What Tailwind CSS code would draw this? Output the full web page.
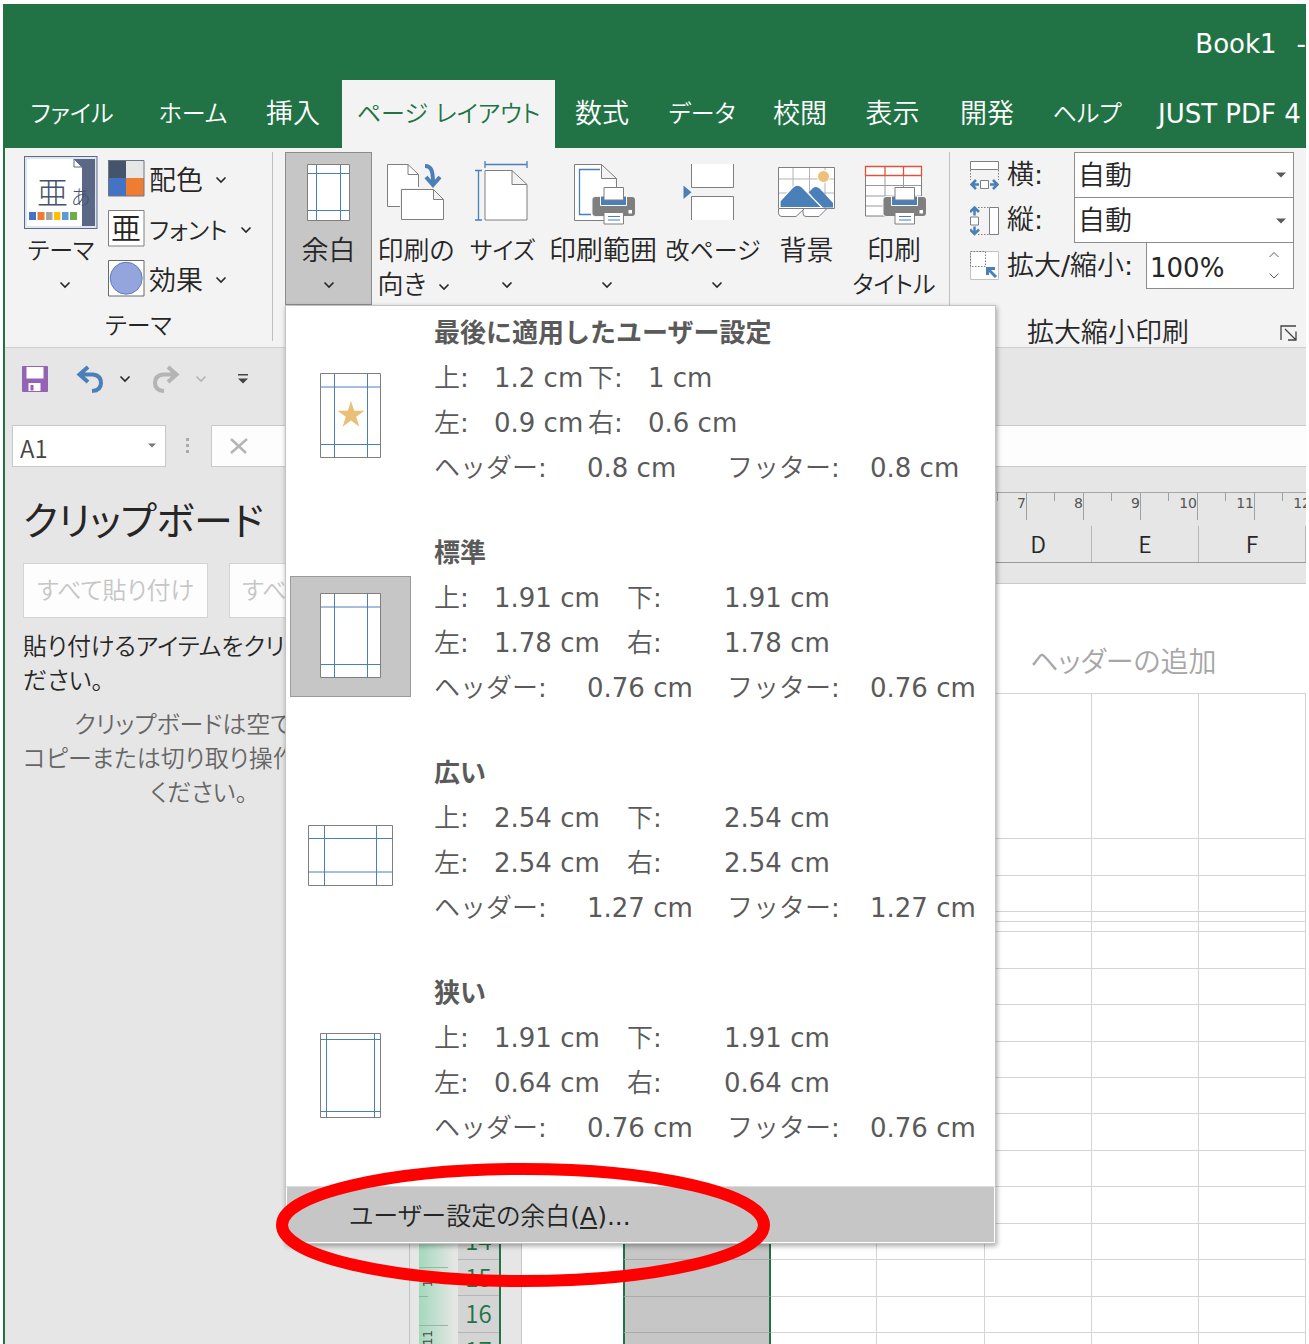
<!DOCTYPE html>
<html lang="ja">
<head>
<meta charset="utf-8">
<title>Book1</title>
<meta name="viewport" content="width=device-width, initial-scale=1">
<script src="https://cdn.jsdelivr.net/npm/@tailwindcss/browser@4"></script>
</head>
<body class="bg-white">
<svg class="hidden" aria-hidden="true">
  <symbol id="chev" viewBox="0 0 12 8"><path d="M1.5 1.5 6 6l4.500-4.500" fill="none" stroke="currentColor" stroke-width="1.600"/></symbol>
  <symbol id="tri" viewBox="0 0 10 6"><path d="M0 .5h10L5 5.500z" fill="currentColor"/></symbol>
  <symbol id="printer" viewBox="0 0 64 64">
    <rect x="18.500" y="34" width="45" height="21" rx="4" fill="#f3f3f3"/>
    <rect x="19.500" y="35" width="42.500" height="19" rx="3" fill="#7f7f7f"/>
    <path d="M27.500 34h26v9.500h-26z" fill="#4a7fb8" stroke="#fff"/>
    <path d="M31 25.500h19.500V38H31zM31 50.500h19.500V62H31z" fill="#fff" stroke="#7f7f7f"/>
    <path d="M35 54.500h12M35 58h12" stroke="#4a7fb8" stroke-width="1.200"/>
    <rect x="55.500" y="48" width="3.500" height="3.500" fill="#fff"/>
  </symbol>
</svg>

<div class="flex h-screen flex-col overflow-hidden px-[3px] pt-1 font-['DejaVu_Sans','Noto_Sans_CJK_JP',sans-serif] text-[26px] font-[350] text-[#262626]">
<div class="flex min-h-0 flex-1 flex-col border-l-2 border-[#217346] bg-[#e6e6e6]">

  <header class="shrink-0 overflow-hidden bg-[#217346] text-white">
    <div class="flex h-[76px] items-center justify-end gap-5 pt-1 font-normal"><span>Book1</span><span>-</span></div>
    <nav class="flex h-[68px] text-[27px] whitespace-nowrap [font-feature-settings:'palt']">
      <button class="w-[134px] shrink-0 text-2xl">ファイル</button>
      <button class="w-[108px] shrink-0 text-2xl">ホーム</button>
      <button class="w-[92px] shrink-0">挿入</button>
      <button class="ml-[3px] w-[213px] shrink-0 bg-[#f3f3f3] text-2xl text-[#217346]">ページ レイアウト</button>
      <button class="w-[94px] shrink-0">数式</button>
      <button class="w-[106px] shrink-0 text-2xl">データ</button>
      <button class="w-[90px] shrink-0">校閲</button>
      <button class="w-[95px] shrink-0">表示</button>
      <button class="w-[94px] shrink-0">開発</button>
      <button class="w-[106px] shrink-0 text-2xl">ヘルプ</button>
      <button class="shrink-0 pl-[18px] text-[26px] font-normal">JUST PDF 4</button>
    </nav>
  </header>

  <section class="flex h-[200px] shrink-0 border-b border-[#cfcfcf] bg-[#f3f3f3] pt-1 text-[27px] whitespace-nowrap [font-feature-settings:'palt']">
    <div class="mb-[6px] flex w-[268px] shrink-0 flex-col border-r border-[#c0c0c0]">
      <div class="flex h-[153px] pl-[18px]">
        <button class="flex w-[76px] flex-col items-center pt-1">
          <svg class="h-[74px] w-[74px]" viewBox="0 0 74 74">
            <rect x=".5" y=".5" width="72.500" height="72" fill="#dfe6ee" stroke="#5b6b8c"/>
            <rect x="3" y="3" width="68" height="67" fill="#5a6886"/>
            <path d="M3 3h47l8 8v59H3z" fill="#fff"/><path d="M50 3v8h8z" fill="#fff" stroke="#5a6886"/>
            <text x="13" y="48" font-size="31" font-weight="300" fill="#44546a">亜</text>
            <text x="47" y="49" font-size="20" font-weight="300" fill="#44546a">あ</text>
            <path d="M5 56h7v8H5z" fill="#4472c4"/><path d="M13.500 56h7v8h-7z" fill="#ed7d31"/><path d="M22 56h6.500v8H22z" fill="#a5a5a5"/><path d="M30 56h6.500v8H30z" fill="#ffc000"/><path d="M38 56h6.500v8H38z" fill="#5b9bd5"/><path d="M46 56h7v8h-7z" fill="#70ad47"/>
          </svg>
          <span class="mt-1 text-2xl leading-[34px]">テーマ</span>
          <svg class="mt-[13px] ml-2 h-2 w-3"><use href="#chev"/></svg>
        </button>
        <div class="flex flex-col pt-px pl-[9px]">
          <button class="flex h-[50px] items-center gap-1">
            <svg class="h-[37px] w-[37px]" viewBox="0 0 37 37"><path fill="#44546a" d="M0 0h18v18H0z"/><path fill="#e7e6e6" d="M18 0h18v18H18z"/><path fill="#4472c4" d="M0 18h18v18H0z"/><path fill="#ed7d31" d="M18 18h18v18H18z"/><path d="M.5.5h35.500V36H.5z" fill="none" stroke="#6f7680"/></svg>
            <span class="pt-[6px]">配色</span><svg class="mt-1 ml-2 h-2 w-3"><use href="#chev"/></svg>
          </button>
          <button class="flex h-[50px] items-center gap-1">
            <svg class="h-[37px] w-[37px]" viewBox="0 0 37 37"><path d="M.5.5h35.500V36H.5z" fill="#fff" stroke="#7f7f7f"/><text x="3" y="29" font-size="30" font-weight="350" fill="#262626">亜</text></svg>
            <span class="pt-[6px] text-2xl">フォント</span><svg class="mt-1 ml-2 h-2 w-3"><use href="#chev"/></svg>
          </button>
          <button class="flex h-[50px] items-center gap-1">
            <svg class="h-[37px] w-[37px]" viewBox="0 0 37 37"><path d="M.5.5h35.500V36H.5z" fill="#fff" stroke="#6b6b6b"/><circle cx="18.200" cy="18.200" r="16" fill="#93a5dc" stroke="#5c7fc0"/></svg>
            <span class="pt-[6px]">効果</span><svg class="mt-1 ml-2 h-2 w-3"><use href="#chev"/></svg>
          </button>
        </div>
      </div>
      <div class="pt-[5px] text-center text-2xl leading-9">テーマ</div>
    </div>

    <div class="ml-3 flex h-[153px] w-[665px] shrink-0 border-r border-[#c0c0c0] leading-[34px]">
      <div class="relative">
        <button class="flex h-[153px] w-[87px] flex-col items-center border border-[#8c8c8c] bg-[#c6c6c6] pt-[9px]" aria-expanded="true">
          <svg class="h-16 w-[45px]" viewBox="0 0 45 64" fill="none"><path d="M1.500 2.500h42v56h-42z" fill="#fff" stroke="#7f7f7f"/><path d="M10.500 3v55M34.500 3v55M2 11.500h41M2 48.500h41" stroke="#4a7fb8"/></svg>
          <span class="mt-2">余白</span>
          <svg class="mt-[13px] h-2 w-3"><use href="#chev"/></svg>
        </button>

        <div class="absolute top-full left-0 z-10 w-[711px] border border-[#c3c3c3] bg-white text-[26px] text-[#5a5a5a] shadow-[1px_2px_5px_rgba(0,0,0,0.35)] [font-feature-settings:normal]">
          <div id="presets"></div>
          <div class="relative border-t border-[#dcdcdc] pr-px pb-px pl-px">
            <button class="flex h-[55px] w-full items-center bg-[#c6c6c6] pt-1 pl-[62px] text-[25px] text-[#262626] [font-feature-settings:'palt']"><span>ユーザー設定の余白<span class="font-normal">(<u>A</u>)...</span></span></button>
            <svg class="absolute -top-6 -left-[10px] h-[124px] w-[494px]" viewBox="0 0 494 124" fill="none"><ellipse cx="247" cy="62" rx="241" ry="56" stroke="#f00" stroke-width="12"/></svg>
          </div>
        </div>
      </div>

      <button class="flex w-[88px] flex-col items-center pt-[10px]">
        <svg class="h-16 w-[60px] shrink-0" viewBox="0 0 60 64" fill="none" stroke="#7f7f7f"><path d="M14 44.500H1.500v-42H22l10.500 10V26H14z" fill="#fff" stroke="none"/><path d="M14 44.500H1.500v-42H22l10.500 10V25M22 2.500v10h10.500"/><path d="M15.500 27.500h32l10 10v20h-42zM47.500 27.500v10h10" fill="#fff"/><path d="M39 4c6 0 8 4 8 17M40 15l7 8 7-8" stroke="#4a7fb8" stroke-width="4"/></svg>
        <span class="mt-2 block text-left text-[26px] leading-[34px]">印刷の<br>向き<svg class="ml-3 inline h-2 w-3"><use href="#chev"/></svg></span>
      </button>
      <button class="flex w-[85px] flex-col items-center pt-[10px]">
        <svg class="mr-1 h-16 w-[54px] shrink-0 overflow-visible" viewBox="0 0 54 64" fill="none"><path d="M11 8.500h27l15 14V58H11zM38 8.500v14h15" fill="#fff" stroke="#7f7f7f"/><path d="M11 2.500h42M11-1v7M53-1v7M4.500 8.500V58M1 8.500h7M1 58h7" stroke="#4a7fb8" stroke-width="1.300"/></svg>
        <span class="mt-2 text-2xl leading-[34px]">サイズ</span><svg class="mt-[13px] ml-2 h-2 w-3"><use href="#chev"/></svg>
      </button>
      <button class="flex w-[116px] flex-col items-center pt-[10px]">
        <svg class="ml-1 h-16 w-16 shrink-0" viewBox="0 0 64 64" fill="none"><path d="M1.500 2.500h27l15 14v42h-42zM28.500 2.500v14h15" fill="#fff" stroke="#7f7f7f"/><path d="M27 7.500H6.500v45H18" stroke="#4a7fb8" stroke-width="1.300"/><use href="#printer" width="64" height="64"/></svg>
        <span class="mt-2">印刷範囲</span><svg class="mt-[13px] ml-2 h-2 w-3"><use href="#chev"/></svg>
      </button>
      <button class="flex w-[104px] flex-col items-center pt-[10px]">
        <svg class="mr-2 h-16 w-[54px] shrink-0" viewBox="0 0 54 64" fill="#fff"><path d="M9.500 2v23.500h42V2M9.500 58V34.500h42V58" stroke="#7f7f7f"/><path d="M1.500 23.500v13.500l8-6.700z" fill="#4a7fb8"/></svg>
        <span class="mt-2 text-2xl leading-[34px]">改ページ</span><svg class="mt-[13px] ml-2 h-2 w-3"><use href="#chev"/></svg>
      </button>
      <button class="flex w-[83px] flex-col items-center pt-[10px]">
        <svg class="h-16 w-[60px] shrink-0" viewBox="0 0 60 64" fill="none"><path d="M1.500 47v4q0 3.500 3.500 3.500h14l8.500-8M26 48v3q0 3.500 3 3.500h13l8-8" fill="#fff" stroke="#7f7f7f"/><path d="M1.500 5.500h56v41h-56z" fill="#fff" stroke="#7f7f7f"/><path d="M16 6v40M32.500 6v40M48 6v40M2 17h55M2 31h55" stroke="#b5b5b5"/><circle cx="46.500" cy="14.500" r="6.500" fill="#fff"/><circle cx="46.500" cy="14.500" r="5.500" fill="#eec17a"/><path d="m32 30 4-4q3.500-2.500 7 1l13 14v4.500H42z" fill="#4a7fb8"/><path d="M3 45.500V39l13-14q4.500-4 9 0l20 20.500z" fill="#4a7fb8" stroke="#fff" stroke-width="1.200"/></svg>
        <span class="mt-2">背景</span>
      </button>
      <button class="flex w-[92px] flex-col items-center pt-[10px]">
        <svg class="ml-1 h-16 w-16 shrink-0" viewBox="0 0 64 64" fill="none"><path d="M1.500 4.500h56V54h-56z" fill="#fff" stroke="#7f7f7f"/><path d="M21 14v40M39.500 14v40M2 23.500h55M2 34h55M2 44h55" stroke="#9a9a9a"/><path d="M1.500 4.500h56v9h-56zM21 5v8M39.500 5v8" stroke="#e0533a" stroke-width="1.300"/><use href="#printer" width="64" height="64"/></svg>
        <span class="mt-2">印刷</span><span class="text-2xl leading-[34px]">タイトル</span>
      </button>
    </div>

    <div class="flex min-w-0 flex-1 flex-col pr-3 pl-5">
      <div class="flex h-[46px] items-center">
        <svg class="mr-2 h-[30px] w-[29px]" viewBox="0 0 29 30" fill="none" stroke="#7f7f7f"><path d="M.5 1.500h28v8H.5zM10.500 20.500h8v8h-8z" fill="#fff"/><path d="M.5 10v10M28.500 10v10" stroke-dasharray="1.500 1.500"/><path d="M9 24.500H2M6 20l-4.500 4.500L6 29M20 24.500h7M23 20l4.500 4.500L23 29" stroke="#4a7fb8" stroke-width="2.500"/></svg>
        <label for="fw" class="w-[67px]">横<span class="font-normal">:</span></label>
        <span class="relative min-w-0 flex-1"><select id="fw" class="h-[46px] w-full appearance-none border border-[#8c8c8c] bg-white pt-[2px] pl-[3px]"><option>自動</option></select><svg class="pointer-events-none absolute top-5 right-2 h-[6px] w-[10px] text-[#5a5a5a]"><use href="#tri"/></svg></span>
      </div>
      <div class="flex h-[45px] items-center">
        <svg class="mr-2 h-[30px] w-[29px]" viewBox="0 0 29 30" fill="none" stroke="#7f7f7f"><path d="M19.500 1.500h9v27h-9zM.5 11h8v8h-8z" fill="#fff"/><path d="M8 1.500h11M8 28.500h11" stroke-dasharray="1.500 1.500"/><path d="M4.500 9.500V2M0 6l4.500-4.500L9 6M4.500 20.500V28M0 23.500 4.500 28 9 23.500" stroke="#4a7fb8" stroke-width="2.500"/></svg>
        <label for="fh" class="w-[67px]">縦<span class="font-normal">:</span></label>
        <span class="relative min-w-0 flex-1"><select id="fh" class="h-[45px] w-full appearance-none border border-t-0 border-[#8c8c8c] bg-white pt-[2px] pl-[3px]"><option>自動</option></select><svg class="pointer-events-none absolute top-5 right-2 h-[6px] w-[10px] text-[#5a5a5a]"><use href="#tri"/></svg></span>
      </div>
      <div class="flex h-[46px] items-center">
        <svg class="mr-2 h-[30px] w-[29px]" viewBox="0 0 29 30" fill="none"><path d="M.5.5h28v28H.5z" fill="#fff" stroke="#c3c3c3"/><path d="M.5.5h15v15H.5z" stroke="#7f7f7f" stroke-dasharray="1.500 1.500"/><path d="m26 26-8-8M17.500 24v-6.500H25" stroke="#4a7fb8" stroke-width="3"/></svg>
        <label for="sc" class="min-w-0 flex-1">拡大<span class="font-normal">/</span>縮小<span class="font-normal">:</span></label>
        <span class="relative"><input id="sc" value="100%" class="block h-[46px] w-[148px] border border-t-0 border-[#8c8c8c] bg-white pt-1 pl-[3px] text-[26px] font-normal"><svg class="pointer-events-none absolute top-2 right-[14px] h-[28px] w-3 text-[#5a5a5a]" viewBox="0 0 12 28" fill="none" stroke="currentColor"><path d="M1.500 6 6 1.500 10.500 6M1.500 22.500 6 27l4.500-4.500"/></svg></span>
      </div>
      <div class="flex flex-1 items-center justify-between pt-6 pl-[57px]">
        <span>拡大縮小印刷</span>
        <svg class="-mr-1 h-4 w-[18px]" viewBox="0 0 18 16" fill="none" stroke="#444" stroke-width="1.300"><path d="M1 15V1h15M5 4l11 11M16 6.500V15H8"/></svg>
      </div>
    </div>
  </section>

  <div class="flex h-[62px] shrink-0 items-center pl-[17px]">
    <svg class="h-7 w-[26px]" viewBox="0 0 26 28"><path d="M1 1h24q1 0 1 1v24q0 1-1 1H1q-1 0-1-1V2q0-1 1-1z" fill="#9463b5"/><path d="M4.500 2h17v11.500h-17zM6.500 18h12v8h-12z" fill="#fff"/><path d="M8.500 20h3v5.500h-3z" fill="#9463b5"/></svg>
    <svg class="ml-7 h-7 w-7" viewBox="0 0 28 28" fill="none" stroke="#4a7fb8" stroke-width="4"><path d="M12 2 3.500 9.500 12 17M4 9.500h13q8 1 8 8.500t-9 8"/></svg>
    <svg class="ml-[15px] h-2 w-3"><use href="#chev"/></svg>
    <svg class="ml-[21px] h-7 w-7" viewBox="0 0 28 28" fill="none" stroke="#b4b4b4" stroke-width="4"><path d="m16 2 8.500 7.500L16 17M24 9.500H11q-8 1-8 8.500t9 8"/></svg>
    <svg class="ml-[15px] h-2 w-3 text-[#b4b4b4]"><use href="#chev"/></svg>
    <svg class="ml-[31px] h-[10px] w-[10px]" viewBox="0 0 10 10"><path d="M0 0h10v1.500H0zM0 4.500h10L5 9.500z" fill="#444"/></svg>
  </div>

  <div class="mt-[15px] flex h-[42px] shrink-0 items-center pl-[7px]">
    <div class="relative h-full w-[154px]">
      <input aria-label="名前ボックス" value="A1" class="h-full w-full border border-[#c9c9c9] bg-white pt-[2px] pl-[7px] font-['Noto_Sans_CJK_JP',sans-serif] text-2xl text-[#444]">
      <svg class="pointer-events-none absolute top-[18px] right-[10px] h-[5px] w-2 text-[#777]"><use href="#tri"/></svg>
    </div>
    <svg class="ml-5 h-4 w-1" viewBox="0 0 4 16" fill="#aaa"><path d="M0 0h3v3H0zM0 6h3v3H0zM0 12h3v3H0z"/></svg>
    <div class="ml-[21px] flex h-full flex-1 items-center border border-r-0 border-[#c9c9c9] bg-[#fdfdfd] pl-[17px]">
      <svg class="h-4 w-5" viewBox="0 0 20 16" fill="none" stroke="#b4b4b4" stroke-width="2.500"><path d="m2 1 15 14M18 1 2 15"/></svg>
    </div>
  </div>

  <main class="mt-[25px] flex min-h-0 flex-1">
    <aside class="-mt-[1px] w-[405px] shrink-0 overflow-hidden border-r border-[#c3c3c3] pl-[18px] whitespace-nowrap [font-feature-settings:'palt']">
      <h2 class="text-[39px] leading-[62px] font-normal">クリップボード</h2>
      <div class="mt-[10px] flex gap-[21px] text-2xl text-[#c6c6c6]">
        <button class="h-[55px] w-[185px] shrink-0 border border-[#d4d4d4] bg-[#fdfdfd]">すべて貼り付け</button>
        <button class="h-[55px] w-[160px] shrink-0 border border-[#d4d4d4] bg-[#fdfdfd] pl-3 text-left">すべてクリア</button>
      </div>
      <p class="mt-3 text-2xl leading-[34px]">貼り付けるアイテムをクリックしてく<br>ださい。</p>
      <p class="mt-[10px] w-[352px] text-center text-2xl leading-[34px] text-[#666]">クリップボードは空です。<br>コピーまたは切り取り操作を行って<br>ください。</p>
    </aside>

    <section class="flex min-w-0 flex-1 flex-col overflow-hidden">
      <div id="ruler" class="flex h-[28px] shrink-0 border-t border-[#a6a6a6] pl-[560px] text-sm font-normal text-[#555]"></div>
      <div class="mt-[6px] flex h-[37px] shrink-0 border-b border-[#999] pl-[575px] text-center font-['Noto_Sans_CJK_JP',sans-serif] text-[23px] leading-[34px]">
        <span class="w-[107px] shrink-0 border-r border-[#b8b8b8]">D</span>
        <span class="w-[107px] shrink-0 border-r border-[#b8b8b8]">E</span>
        <span class="w-[107px] shrink-0 border-r border-[#b8b8b8]">F</span>
      </div>
      <div class="flex min-h-0 flex-1">
        <div class="ml-[9px] w-[37px] shrink-0 overflow-hidden bg-linear-to-r from-[#a2d9bb] to-[#e6e6e6] pt-[704px] text-xs leading-none font-normal text-[#444]">
          <div class="flex h-[29px] w-[29px] items-start border-t border-[#9ab5a6] pt-1 pl-[3px]"><span class="rotate-180 [writing-mode:vertical-rl]">10</span></div>
          <div class="w-[9px] border-t border-[#8fb3a0]"></div>
          <div class="mt-[28px] flex w-[29px] items-start border-t border-[#9ab5a6] pt-1 pl-[3px]"><span class="rotate-180 [writing-mode:vertical-rl]">11</span></div>
        </div>
        <div class="ml-[2px] w-[43px] shrink-0 overflow-hidden border-r-2 border-[#217346] bg-[#d4d4d4] pt-[660px] text-center font-['Noto_Sans_CJK_JP',sans-serif] text-2xl leading-[34px] text-[#217346]">
          <div class="h-[37px] border-b border-[#b5b5b5]">14</div>
          <div class="h-[36px] border-b border-[#b5b5b5]">15</div>
          <div class="h-[37px] border-b border-[#b5b5b5]">16</div>
          <div class="h-[36px] border-b border-[#b5b5b5]">17</div>
        </div>
        <div class="mt-[20px] ml-[20px] min-w-0 flex-1 overflow-hidden border-t border-l border-[#c9c9c9] bg-white">
          <div class="flex h-[109px] items-end pl-[508px] text-[28px] whitespace-nowrap text-[#a6a6a6] [font-feature-settings:'palt']"><span class="pb-[9px]">ヘッダーの追加</span></div>
          <table class="ml-[101px] w-[683px] table-fixed border-separate border-spacing-0 border-t border-[#d4d4d4] leading-none">
            <colgroup><col class="w-[148px]"><col class="w-[106px]"><col class="w-[108px]"><col class="w-[107px]"><col class="w-[107px]"><col class="w-[107px]"></colgroup>
            <tbody id="rows"></tbody>
          </table>
        </div>
      </div>
    </section>
  </main>
</div>
</div>

<script>
  // Margin presets: name, [top, bottom, left, right, header, footer], page size, guide lines
  const presets = [
    { name: '最後に適用したユーザー設定', v: ['1.2', '1', '0.9', '0.6', '0.8', '0.8'], w: 60, h: 84, x: [14.5, 47.5], y: [14, 71.5], star: true, narrow: true },
    { name: '標準', v: ['1.91', '1.91', '1.78', '1.78', '0.76', '0.76'], w: 60, h: 84, x: [14.5, 47.5], y: [14, 71.5], current: true },
    { name: '広い', v: ['2.54', '2.54', '2.54', '2.54', '1.27', '1.27'], w: 84, h: 60, x: [16.5, 68.5], y: [13.5, 47] },
    { name: '狭い', v: ['1.91', '1.91', '0.64', '0.64', '0.76', '0.76'], w: 60, h: 84, x: [6.5, 54.5], y: [6.5, 78.5] },
  ];
  const line = (p, a, av, b, bv) => `<span class="flex"><span class="w-[60px]">${a}<span class="font-normal">:</span></span>
    <span class="font-normal ${p.narrow ? 'w-[94px]' : 'w-[133px]'}">${av} cm</span>
    <span class="${p.narrow ? 'w-[60px]' : 'w-[97px]'}">${b}<span class="font-normal">:</span></span><span class="font-normal">${bv} cm</span></span>`;
  const star = '<path d="m31 28 3.200 9.800h10.300l-8.300 6 3.200 9.900-8.400-6.100-8.400 6.100 3.200-9.900-8.300-6h10.300z" fill="#eabf78"/>';
  document.getElementById('presets').innerHTML = presets.map(p => `
    <button class="flex w-full items-center gap-[23px] pl-1 text-left leading-[45px]">
      <span class="flex h-[121px] w-[121px] shrink-0 items-center justify-center ${p.current ? 'border border-[#9a9a9a] bg-[#c6c6c6]' : ''}">
        <svg width="${p.w + 2}" height="${p.h + 2}" viewBox="0 0 ${p.w + 2} ${p.h + 2}" fill="none">
          <path d="M.5.5h${p.w}v${p.h}H.5z" fill="#fff" stroke="#7f7f7f"/>
          <path d="M${p.x[0]} 1v${p.h}M${p.x[1]} 1v${p.h}M1 ${p.y[0]}h${p.w}M1 ${p.y[1]}h${p.w}" stroke="#4a7fb8"/>${p.star ? star : ''}
        </svg>
      </span>
      <span class="block pt-[5px] pb-[35px]">
        <b class="block font-bold">${p.name}</b>
        ${line(p, '上', p.v[0], '下', p.v[1])}
        ${line(p, '左', p.v[2], '右', p.v[3])}
        <span class="flex"><span class="w-[153px]">ヘッダー<span class="font-normal">:</span></span><span class="w-[140px] font-normal">${p.v[4]} cm</span><span class="w-[143px]">フッター<span class="font-normal">:</span></span><span class="font-normal">${p.v[5]} cm</span></span>
      </span>
    </button>`).join('');

  const heights = [145, 37, 36, 10, 10, 37, 36, 37, 36, 36, 37, 36, 37, 36, 37, 36, 37];
  const selected = '<td class="border-x-2 border-b border-x-[#217346] border-b-[#aaaaaa] bg-[#c6c6c6] p-0"></td>';
  const plain = '<td class="border-r border-b border-[#d4d4d4] p-0"></td>';
  document.getElementById('rows').innerHTML =
    heights.map(h => `<tr style="height:${h}px">${selected}${plain.repeat(5)}</tr>`).join('');
  document.getElementById('ruler').innerHTML = [7, 8, 9, 10, 11, 12].map(n =>
    `<div class="flex w-[57px] shrink-0 border-r border-[#a0a0a0]"><i class="h-2 w-7 border-r border-[#a0a0a0]"></i><span class="flex-1 text-right">${n}</span></div>`).join('');
</script>
</body>
</html>
